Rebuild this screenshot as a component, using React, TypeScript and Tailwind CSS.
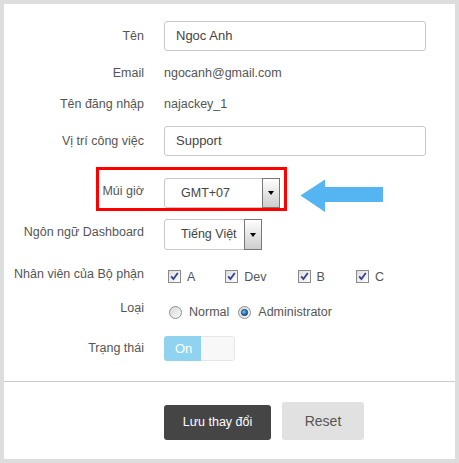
import React from 'react';

const font = { fontFamily: '"Liberation Sans", Arial, sans-serif' };

function Row({ label, children, className = '', labelClass = '' }: { label: string; children: React.ReactNode; className?: string; labelClass?: string }) {
  return (
    <div className={`grid grid-cols-[140px_1fr] gap-x-5 items-center ${className}`}>
      <div className={`text-right text-[12.5px] text-[#555] whitespace-nowrap ${labelClass}`}>{label}</div>
      <div className="flex items-center">{children}</div>
    </div>
  );
}

function TextInput({ value }: { value: string }) {
  return (
    <div className="w-[262px] h-[30px] border border-[#c8c8c8] rounded-[3px] flex items-center pl-[11px] text-[13px] text-[#444]">
      {value}
    </div>
  );
}

function Select({ value, width }: { value: string; width: string }) {
  return (
    <div className={`${width} h-full border border-[#c8c8c8] rounded-[3px] flex items-stretch bg-white`}>
      <div className="flex-1 flex items-center pl-4 text-[12.5px] text-[#444]">{value}</div>
      <div className="w-[18px] -my-px -mr-px border border-[#777] bg-gradient-to-b from-white to-[#cdcdcd] flex items-center justify-center">
        <div className="w-0 h-0 border-x-[3.5px] border-x-transparent border-t-[4px] border-t-black" />
      </div>
    </div>
  );
}

function Check({ label, className = '' }: { label: string; className?: string }) {
  return (
    <div className={`flex items-center ${className}`}>
      <svg width="13" height="13" viewBox="0 0 13 13">
        <defs>
          <linearGradient id="cb" x1="0" y1="0" x2="1" y2="1">
            <stop offset="0" stopColor="#dcdcdc" />
            <stop offset="1" stopColor="#ffffff" />
          </linearGradient>
        </defs>
        <rect x="0.5" y="0.5" width="12" height="12" fill="url(#cb)" stroke="#8a8a8a" />
        <path d="M3.2 6.4 L5.4 9 L9.8 3" fill="none" stroke="#33418f" strokeWidth="1.8" />
      </svg>
      <span className="ml-[6px] text-[12.5px] text-[#555]">{label}</span>
    </div>
  );
}

function Radio({ label, checked }: { label: string; checked?: boolean }) {
  return (
    <div className="flex items-center">
      <svg width="13" height="13" viewBox="0 0 13 13">
        <defs>
          <linearGradient id="rb" x1="0" y1="0" x2="1" y2="1">
            <stop offset="0" stopColor="#d8d8d8" />
            <stop offset="1" stopColor="#fafafa" />
          </linearGradient>
          <radialGradient id="rd" cx="0.4" cy="0.4" r="0.6">
            <stop offset="0" stopColor="#6fc3ff" />
            <stop offset="1" stopColor="#0a4d94" />
          </radialGradient>
        </defs>
        <circle cx="6.5" cy="6.5" r="6" fill="url(#rb)" stroke="#8f8f8f" />
        {checked && <circle cx="6.5" cy="6.5" r="3.2" fill="url(#rd)" stroke="#1f3550" strokeWidth="0.6" />}
      </svg>
      <span className="ml-[7px] text-[12.5px] text-[#555]">{label}</span>
    </div>
  );
}

export default function App() {
  return (
    <div className="w-[459px] h-[463px] bg-[#dddddd] p-1" style={font}>
      <div className="h-full bg-white flex flex-col">
        <Row label="Tên" className="mt-[17px]">
          <TextInput value="Ngoc Anh" />
        </Row>
        <Row label="Email" className="mt-[12px] h-[20px]">
          <span className="text-[12.5px] text-[#555]">ngocanh@gmail.com</span>
        </Row>
        <Row label="Tên đăng nhập" className="mt-[11px] h-[20px]">
          <span className="text-[12.5px] text-[#555]">najackey_1</span>
        </Row>
        <Row label="Vị trí công việc" className="mt-[12px]">
          <TextInput value="Support" />
        </Row>

        {/* Múi giờ, highlighted */}
        <div className="relative mt-[17px]">
          <div className="absolute left-[92px] top-[-6px] w-[191px] h-[44px] border-[3px] border-[#ff0000]" />
          <Row label="Múi giờ" className="h-[30px]" labelClass="pb-[4px]">
            <div className="h-[30px] flex">
              <Select value="GMT+07" width="w-[116px]" />
            </div>
            <svg width="84" height="34" viewBox="0 0 84 34" className="ml-[20px] mt-[6px]">
              <path d="M0.5 16.5 L25 0.5 L25 8 L83 8 L83 23 L25 23 L25 33 Z" fill="#55b4f2" />
            </svg>
          </Row>
        </div>

        <Row label="Ngôn ngữ Dashboard" className="mt-[16px] h-[31px]" labelClass="pb-[4px]">
          <div className="h-[31px] flex">
            <Select value="Tiếng Việt" width="w-[98px]" />
          </div>
        </Row>

        <Row label="Nhân viên của Bộ phận" className="mt-[15px] h-[20px]" labelClass="pb-[3px]">
          <div className="flex items-center pl-[4px] pt-[2px]">
            <Check label="A" />
            <Check label="Dev" className="ml-[30px]" />
            <Check label="B" className="ml-[31px]" />
            <Check label="C" className="ml-[31px]" />
          </div>
        </Row>

        <Row label="Loại" className="mt-[13px] h-[20px]" labelClass="pb-[4px]">
          <div className="flex items-center gap-[9px] pl-[5px] pt-[5px]">
            <Radio label="Normal" />
            <Radio label="Administrator" checked />
          </div>
        </Row>

        <Row label="Trạng thái" className="mt-[18px] h-[25px]">
          <div className="w-[71px] h-[25px] rounded-[3px] overflow-hidden flex">
            <div className="w-[37px] bg-[#8fd3f0] text-white text-[13px] flex items-center pl-[11px]">On</div>
            <div className="flex-1 bg-[#f8f8f8] border border-l-0 border-[#e6e6e6] rounded-r-[3px]" />
          </div>
        </Row>

        <div className="mt-[20px] border-t border-[#cccccc]" />

        <div className="flex items-end mt-[20px] pl-[160px] gap-[11px]">
          <button className="w-[107px] h-[35px] bg-[#454545] rounded-[3px] text-white text-[12.5px]">Lưu thay đổi</button>
          <button className="w-[82px] h-[38px] bg-[#e1e1e1] rounded-[3px] text-[#555] text-[14px]">Reset</button>
        </div>
      </div>
    </div>
  );
}
